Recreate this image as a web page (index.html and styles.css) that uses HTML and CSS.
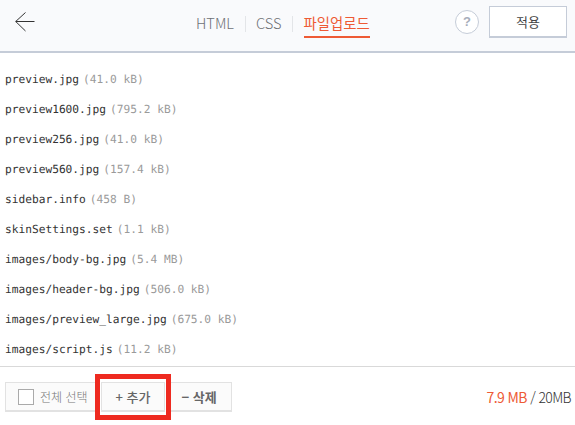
FILE: index.html
```html
<!DOCTYPE html>
<html lang="ko">
<head>
<meta charset="utf-8">
<title>파일업로드</title>
<link rel="stylesheet" href="styles.css">
</head>
<body>
<header class="top">
  <a class="back" aria-label="back">
    <svg width="20" height="20" viewBox="0 0 20 20"><path d="M19.5 9.5H.7M10.5 .5L.7 9.5l9.8 9.5" fill="none" stroke="#333" stroke-width="1"/></svg>
  </a>
  <nav class="tabs">
    <span class="tab">HTML</span><i class="sep"></i><span class="tab">CSS</span><i class="sep"></i><span class="tab active">파일업로드</span>
  </nav>
  <span class="help">?</span>
  <button class="apply">적용</button>
</header>
<main class="files">
  <div class="file"><span class="name">preview.jpg</span><span class="size">(41.0 kB)</span></div>
  <div class="file"><span class="name">preview1600.jpg</span><span class="size">(795.2 kB)</span></div>
  <div class="file"><span class="name">preview256.jpg</span><span class="size">(41.0 kB)</span></div>
  <div class="file"><span class="name">preview560.jpg</span><span class="size">(157.4 kB)</span></div>
  <div class="file"><span class="name">sidebar.info</span><span class="size">(458 B)</span></div>
  <div class="file"><span class="name">skinSettings.set</span><span class="size">(1.1 kB)</span></div>
  <div class="file"><span class="name">images/body-bg.jpg</span><span class="size">(5.4 MB)</span></div>
  <div class="file"><span class="name">images/header-bg.jpg</span><span class="size">(506.0 kB)</span></div>
  <div class="file"><span class="name">images/preview_large.jpg</span><span class="size">(675.0 kB)</span></div>
  <div class="file"><span class="name">images/script.js</span><span class="size">(11.2 kB)</span></div>
</main>
<footer class="bottom">
  <label class="btn select"><i class="check"></i>전체 선택</label>
  <button class="btn add">+ 추가</button>
  <button class="btn del">− 삭제</button>
  <div class="usage"><span class="used">7.9 MB</span> / 20MB</div>
  <div class="marker"></div>
</footer>
</body>
</html>
```
FILE: styles.css
```css
* { box-sizing: border-box; }
html, body { margin: 0; height: 100%; }
body { width: 575px; height: 425px; overflow: hidden; background: #fff; font-family: "Noto Sans CJK KR", "Noto Sans", sans-serif; display: flex; flex-direction: column; }
.top { height: 53px; flex: none; background: #f9fafc; border-bottom: 2px solid #c5ccd8; display: flex; align-items: center; position: relative; }
.back { display: block; margin: -7px 0 0 15px; height: 20px; width: 20px; }
.tabs { position: absolute; left: 196px; top: 0; height: 51px; display: flex; align-items: center; font-size: 14.6px; font-weight: 300; color: #6f7176; }
.tab { line-height: 46px; height: 46px; margin-top: -5px; }
.sep { width: 1px; height: 16px; background: #e3e5e8; margin: -4px 10.5px 0; }
.active { color: #ee5a35; position: relative; font-size: 14.4px; font-weight: 400; }
.active::after { content: ""; position: absolute; left: 0; right: 0; top: 36px; height: 2px; background: #ee5a35; }
.help { position: absolute; left: 455px; top: 10px; width: 24px; height: 24px; border-radius: 50%; border: 1px solid #c5ccd8; background: #fff; color: #a7aebb; font: bold 13px/22px "Liberation Sans", sans-serif; text-align: center; }
.apply { position: absolute; left: 489px; top: 6px; width: 78px; height: 32px; background: #fff; border: 1px solid #c5ccd8; border-bottom-width: 2px; font: 13px "Noto Sans CJK KR", sans-serif; color: #444; padding: 0; }
.files { flex: none; height: 314px; padding-top: 12px; border-bottom: 1px solid #d9d9d9; }
.file { height: 30px; line-height: 30px; padding-left: 5px; font-family: "DejaVu Sans Mono", monospace; font-size: 11.2px; text-rendering: geometricPrecision; color: #333; white-space: nowrap; }
.size { color: #9a9a9a; margin-left: 4px; }
.bottom { flex: 1; display: flex; align-items: flex-start; padding: 15px 4px 0 5px; position: relative; }
.btn { height: 30px; background: #fbfbfb; border: 1px solid #e2e2e2; border-bottom-width: 2px; font-family: "Noto Sans CJK KR", sans-serif; padding: 0; display: flex; align-items: center; justify-content: center; }
.select { width: 92px; font-size: 12px; font-weight: 300; color: #777; justify-content: flex-start; padding-left: 12px; }
.check { width: 16px; height: 16px; border: 1px solid #aaa; background: #fff; margin-right: 6px; flex: none; }
.add { width: 64px; margin-left: 4px; font-size: 13px; font-weight: 500; color: #666; }
.del { width: 66px; margin-left: 1px; font-size: 13px; font-weight: 700; color: #666; }
.usage { margin-left: auto; margin-top: 5px; font-size: 14px; font-weight: 300; letter-spacing: -.6px; color: #333; line-height: 20px; }
.used { color: #ee5a35; font-weight: 400; }
.marker { position: absolute; left: 95px; top: 7px; width: 76px; height: 46px; border: 5px solid #ee2a20; }
```
